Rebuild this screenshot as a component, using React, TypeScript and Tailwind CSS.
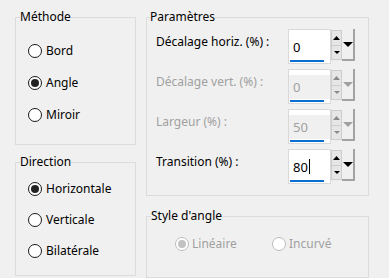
import React from "react";

function Radio({ label, checked = false, disabled = false }: { label: string; checked?: boolean; disabled?: boolean }) {
  return (
    <div className="flex items-center h-[16px]">
      <span
        className={
          disabled
            ? "w-[14px] h-[14px] rounded-full border-[1.5px] border-[#bcbcbc] bg-white flex items-center justify-center shrink-0"
            : "w-[14px] h-[14px] rounded-full border-[1.5px] border-[#1a1a1a] bg-white flex items-center justify-center shrink-0"
        }
      >
        {checked && (
          <span className={disabled ? "w-[8px] h-[8px] rounded-full bg-[#c2c2c2]" : "w-[8px] h-[8px] rounded-full bg-[#222]"} />
        )}
      </span>
      <span className={disabled ? "ml-[3px] text-[#a0a0a0]" : "ml-[4px]"}>{label}</span>
    </div>
  );
}

function TriUp({ color }: { color: string }) {
  return (
    <svg width="7" height="4" viewBox="0 0 7 4">
      <path d="M3.5 0 L7 4 L0 4 Z" fill={color} />
    </svg>
  );
}
function TriDown({ color, w = 7, h = 4 }: { color: string; w?: number; h?: number }) {
  return (
    <svg width={w} height={h} viewBox={`0 0 ${w} ${h}`}>
      <path d={`M0 0 L${w} 0 L${w / 2} ${h} Z`} fill={color} />
    </svg>
  );
}

function Spin({ value, disabled = false, caret = false }: { value: string; disabled?: boolean; caret?: boolean }) {
  const arrow = disabled ? "#8a8a8a" : "#000";
  return (
    <div className="flex items-start h-[35px]">
      <div className="relative w-[43px] h-[35px] bg-white border border-[#d9d9d9]">
        {disabled && <div className="absolute left-0 right-0 top-[5px] bottom-[4px] bg-[#f0f0f0]" />}
        <div className={disabled ? "relative flex items-center h-full pl-[4px] text-[#a0a0a0] text-[13px]" : "relative flex items-center h-full pl-[4px] text-black text-[13px]"}>
          <span>{value}</span>
          {caret && <span className="w-px h-[15px] bg-black ml-px" />}
        </div>
        <div className="absolute left-[1px] bottom-[1px] h-[2px] w-[34px] bg-[#0a6fd0]" />
      </div>
      <div className="flex flex-col w-[11px] mt-[1px]">
        <div className="h-[16px] bg-[#e6e6e6] border border-[#cdcdcd] flex items-center justify-center">
          <TriUp color={arrow} />
        </div>
        <div className="h-[14px] bg-[#e6e6e6] border border-t-0 border-[#cdcdcd] flex items-center justify-center">
          <TriDown color={arrow} w={6} h={3} />
        </div>
      </div>
      <div className="w-[13px] h-[32px] bg-[#f0f0f0] border-r-2 border-b-2 border-[#a3a3a3] flex items-center justify-center">
        <TriDown color={disabled ? "#a0a0a0" : "#000"} w={10} h={5} />
      </div>
    </div>
  );
}

function Row({ label, children, disabled = false }: { label: string; children: React.ReactNode; disabled?: boolean }) {
  return (
    <div className="flex items-start h-[35px]">
      <div className={disabled ? "w-[132px] mt-[5px] text-[#a0a0a0]" : "w-[132px] mt-[5px] text-black"}>{label}</div>
      {children}
    </div>
  );
}

export default function App() {
  return (
    <div className="w-[389px] h-[278px] bg-[#f0f0f0] flex pl-[15px] pt-[9px] text-[12px] leading-[16px] text-black font-['Noto_Sans',sans-serif] overflow-hidden">
      <div className="flex flex-col w-[121px]">
        <fieldset className="border border-[#dcdcdc] m-0 p-0">
          <legend className="ml-[4px] px-0 leading-[16px]">Méthode</legend>
          <div className="flex flex-col gap-[16px] pl-[12px] pt-[18px] pb-[21px]">
            <Radio label="Bord" />
            <Radio label="Angle" checked />
            <Radio label="Miroir" />
          </div>
        </fieldset>
        <fieldset className="border border-[#dcdcdc] m-0 mt-[9px] p-0">
          <legend className="ml-[4px] px-0 leading-[16px]">Direction</legend>
          <div className="flex flex-col gap-[15px] pl-[12px] pt-[11px] pb-[16px]">
            <Radio label="Horizontale" checked />
            <Radio label="Verticale" />
            <Radio label="Bilatérale" />
          </div>
        </fieldset>
      </div>
      <div className="flex flex-col w-[223px] ml-[10px]">
        <fieldset className="border border-[#dcdcdc] m-0 p-0">
          <legend className="ml-[3px] px-0 leading-[16px]">Paramètres</legend>
          <div className="flex flex-col gap-[5px] pl-[9px] pt-[4px] pb-[11px]">
            <Row label="Décalage horiz. (%) :">
              <Spin value="0" />
            </Row>
            <Row label="Décalage vert. (%) :" disabled>
              <Spin value="0" disabled />
            </Row>
            <Row label="Largeur (%) :" disabled>
              <Spin value="50" disabled />
            </Row>
            <Row label="Transition (%) :">
              <Spin value="80" caret />
            </Row>
          </div>
        </fieldset>
        <fieldset className="border border-[#dcdcdc] m-0 mt-[12px] p-0">
          <legend className="ml-[4px] px-0 leading-[16px]">Style d'angle</legend>
          <div className="flex pl-[28px] pt-[12px] pb-[25px]">
            <div className="w-[97px]">
              <Radio label="Linéaire" checked disabled />
            </div>
            <Radio label="Incurvé" disabled />
          </div>
        </fieldset>
      </div>
    </div>
  );
}
